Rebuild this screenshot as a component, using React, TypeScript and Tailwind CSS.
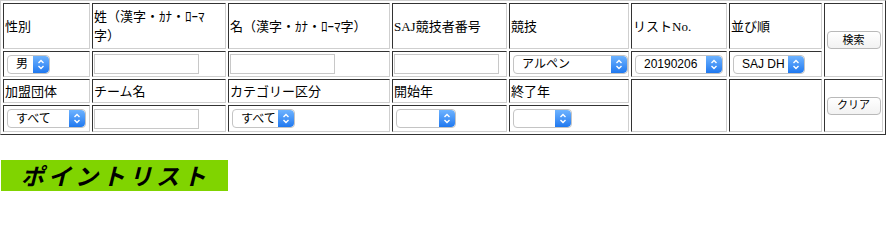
import React from "react";

const cell =
  "border border-t-[#333] border-l-[#333] border-b-[#cfcfcf] border-r-[#cfcfcf] p-px align-middle text-left";

function Stepper() {
  return (
    <span className="flex h-full w-[16px] flex-none items-center justify-center rounded-r-[4px] bg-gradient-to-b from-[#6db3ff] to-[#1e78ef]">
      <svg width="8" height="11" viewBox="0 0 8 11" fill="none">
        <path d="M1.5 4 L4 1.5 L6.5 4" stroke="white" strokeWidth="1.4" />
        <path d="M1.5 7 L4 9.5 L6.5 7" stroke="white" strokeWidth="1.4" />
      </svg>
    </span>
  );
}

function Select({ w, value }: { w: string; value?: string }) {
  return (
    <div
      className={`ml-[2px] flex h-[19px] items-center overflow-hidden rounded-[4px] border border-[#c4c4c4] bg-white ${w}`}
    >
      <span className="flex-1 overflow-hidden whitespace-nowrap pl-[8px] text-[12px] leading-none text-black">
        {value}
      </span>
      <Stepper />
    </div>
  );
}

function TextInput() {
  return <div className="h-[20px] w-[105px] border border-[#c8c8c8] bg-white" />;
}

function Button({ label }: { label: string }) {
  return (
    <div className="mx-auto flex h-[18px] w-[54px] items-center justify-center rounded-[4px] border border-[#b9b9b9] bg-gradient-to-b from-white to-[#f2f2f2] text-[11px] text-black">
      {label}
    </div>
  );
}

export default function App() {
  return (
    <div className="bg-white font-['Liberation_Serif','Noto_Sans_CJK_JP',serif] text-[13px] leading-[19px] text-black">
      <table className="w-[886px] table-fixed border-separate border-spacing-[2px] border border-t-[#cfcfcf] border-l-[#cfcfcf] border-b-[#333] border-r-[#333]">
        <tbody>
          <tr className="h-[46px]">
            <td className={`${cell} w-[87px]`}>性別</td>
            <td className={`${cell} w-[134px]`}>姓（漢字・ｶﾅ・ﾛｰﾏ字）</td>
            <td className={`${cell} w-[162px]`}>名（漢字・ｶﾅ・ﾛｰﾏ字）</td>
            <td className={`${cell} w-[115px]`}>SAJ競技者番号</td>
            <td className={`${cell} w-[120px]`}>競技</td>
            <td className={`${cell} w-[96px]`}>リストNo.</td>
            <td className={`${cell} w-[93px]`}>並び順</td>
            <td className={`${cell} w-[59px]`} rowSpan={2}>
              <Button label="検索" />
            </td>
          </tr>
          <tr className="h-[26px] font-['Liberation_Sans','Noto_Sans_CJK_JP',sans-serif]">
            <td className={cell}>
              <Select w="w-[43px]" value="男" />
            </td>
            <td className={cell}>
              <TextInput />
            </td>
            <td className={cell}>
              <TextInput />
            </td>
            <td className={cell}>
              <TextInput />
            </td>
            <td className={cell}>
              <Select w="w-[115px]" value="アルペン" />
            </td>
            <td className={cell}>
              <Select w="w-[88px]" value="20190206" />
            </td>
            <td className={cell}>
              <Select w="w-[72px]" value="SAJ DH" />
            </td>
          </tr>
          <tr className="h-[24px]">
            <td className={cell}>加盟団体</td>
            <td className={cell}>チーム名</td>
            <td className={cell}>カテゴリー区分</td>
            <td className={cell}>開始年</td>
            <td className={cell}>終了年</td>
            <td className={cell} rowSpan={2}></td>
            <td className={cell} rowSpan={2}></td>
            <td className={cell} rowSpan={2}>
              <Button label="クリア" />
            </td>
          </tr>
          <tr className="h-[27px] font-['Liberation_Sans','Noto_Sans_CJK_JP',sans-serif]">
            <td className={cell}>
              <Select w="w-[79px]" value="すべて" />
            </td>
            <td className={cell}>
              <TextInput />
            </td>
            <td className={cell}>
              <Select w="w-[63px]" value="すべて" />
            </td>
            <td className={cell}>
              <Select w="w-[60px]" />
            </td>
            <td className={cell}>
              <Select w="w-[59px]" />
            </td>
          </tr>
        </tbody>
      </table>
      <div className="ml-px mt-[25px] flex h-[31px] w-[227px] items-center bg-[#80d400] pl-[20px]">
        <h2 className="font-['Noto_Sans_CJK_JP',sans-serif] text-[23px] font-bold italic leading-none tracking-[4px] text-black">
          ポイントリスト
        </h2>
      </div>
    </div>
  );
}
